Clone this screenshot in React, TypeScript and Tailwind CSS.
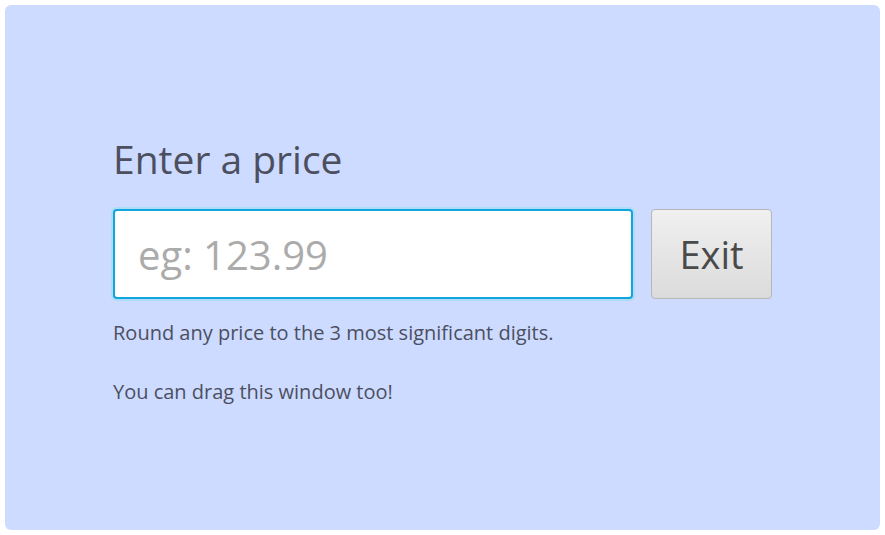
import React from "react"

const App = () => {
  return (
    <div className="w-[885px] h-[535px] bg-white p-[5px] font-['Open_Sans',sans-serif]">
      <div className="w-full h-full rounded-md bg-[#ccdbff] flex flex-col pl-[108px] pt-[128px]">
        <h1 className="text-[39px] leading-[52px] text-[#4d4f5f]">Enter a price</h1>
        <div className="flex gap-[18px] mt-[24px]">
          <input
            placeholder="eg: 123.99"
            className="w-[520px] h-[90px] rounded-[4px] border-2 border-[#10a5dc] bg-white px-[23px] text-[40px] text-[#444] placeholder:text-[#ababab] outline-none shadow-[0_0_0_2px_rgba(150,220,245,0.6)]"
          />
          <button className="w-[121px] h-[90px] rounded-[4px] border border-[#b7b7b7] bg-gradient-to-b from-[#f0f0f0] to-[#dbdbdb] text-[38px] text-[#4a4a4a]">
            Exit
          </button>
        </div>
        <p className="mt-[21px] text-[20px] leading-[26px] text-[#4d4f5f]">Round any price to the 3 most significant digits.</p>
        <p className="mt-[33px] text-[20px] leading-[26px] text-[#4d4f5f]">You can drag this window too!</p>
      </div>
    </div>
  )
}

export default App
